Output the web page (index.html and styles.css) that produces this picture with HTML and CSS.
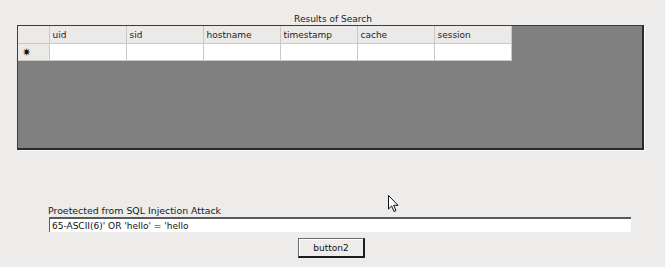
FILE: index.html
```html
<!DOCTYPE html>
<html lang="en">
  <head>
    <meta charset="UTF-8" />
    <title>Results of Search</title>
    <link rel="stylesheet" href="styles.css">
  </head>
  <body>
    <div class="form-window">
      <div class="results-title">Results of Search</div>

      <div class="grid-view">
        <table class="grid-table">
          <tr class="grid-header">
            <td class="row-head"></td>
            <td>uid</td>
            <td>sid</td>
            <td>hostname</td>
            <td>timestamp</td>
            <td>cache</td>
            <td>session</td>
          </tr>
          <tr class="grid-row">
            <td class="row-head">&#x2737;</td>
            <td></td>
            <td></td>
            <td></td>
            <td></td>
            <td></td>
            <td></td>
          </tr>
        </table>
      </div>

      <div class="search-label">Proetected from SQL Injection Attack</div>
      <input class="search-box" type="text" value="65-ASCII(6)' OR 'hello' = 'hello">

      <div class="btn-row">
        <button class="btn">button2</button>
      </div>

      <!-- mouse pointer from the screenshot -->
      <svg class="cursor" width="12" height="18" viewBox="0 0 12 18">
        <path d="M0.5 0.5 L0.5 14 L3.6 11 L6 16.5 L8 15.6 L5.7 10.3 L10 10.3 Z" fill="#fff" stroke="#111" stroke-width="1" stroke-linejoin="round" />
      </svg>
    </div>
  </body>
</html>
```

FILE: styles.css
```css
* {
  box-sizing: border-box;
}

body {
  margin: 0;
  background: #edeceb;
  font-family: "DejaVu Sans", sans-serif;
  font-size: 9px;
  color: #1a1a1a;
}

.form-window {
  position: relative;
  width: 665px;
  height: 267px;
  padding-top: 12px;
}

.results-title {
  width: 626px;
  margin-left: 20px;
  text-align: center;
  height: 13px;
  line-height: 14px;
}

.grid-view {
  width: 627px;
  height: 125px;
  margin-left: 17px;
  background: #808080;
  border-top: 1px solid #3c3c3c;
  border-left: 1px solid #3c3c3c;
  border-right: 2px solid #2a2a2a;
  border-bottom: 2px solid #2a2a2a;
  box-shadow: 1px 1px 0 #fbfbfb;
}

.grid-table {
  border-collapse: collapse;
}

.grid-table td {
  width: 77px;
  height: 17px;
  padding: 1px 0 0 3px;
  border-right: 1px solid #c9c8c5;
  border-bottom: 1px solid #c9c8c5;
  background: #fff;
  vertical-align: middle;
}

.grid-header td {
  background: #ebeae8;
  color: #222;
}

.grid-table .row-head {
  width: 31px;
  background: #ebeae8;
  padding-left: 4px;
  font-size: 11px;
  line-height: 1;
  color: #111;
}

.search-label {
  margin: 55px 0 0 48px;
  height: 12px;
  line-height: 12px;
  font-size: 9.4px;
}

.search-box {
  display: block;
  width: 582px;
  height: 15px;
  margin-left: 49px;
  padding: 0 0 0 2px;
  font-family: "DejaVu Sans", sans-serif;
  font-size: 9px;
  color: #111;
  background: #fff;
  border: none;
  border-top: 2px solid #5a5a5a;
  border-left: 1px solid #5a5a5a;
  outline: none;
}

.btn-row {
  display: flex;
  justify-content: center;
  margin-top: 6px;
  padding-right: 2px;
}

.btn {
  width: 67px;
  height: 20px;
  padding: 0;
  font-family: "DejaVu Sans", sans-serif;
  font-size: 9px;
  color: #111;
  background: #edeceb;
  border-top: 1px solid #6a6a6a;
  border-left: 1px solid #6a6a6a;
  border-right: 2px solid #1c1c1c;
  border-bottom: 2px solid #1c1c1c;
  box-shadow: inset 1px 1px 0 #fff;
}

.cursor {
  position: absolute;
  left: 388px;
  top: 195px;
}
```
